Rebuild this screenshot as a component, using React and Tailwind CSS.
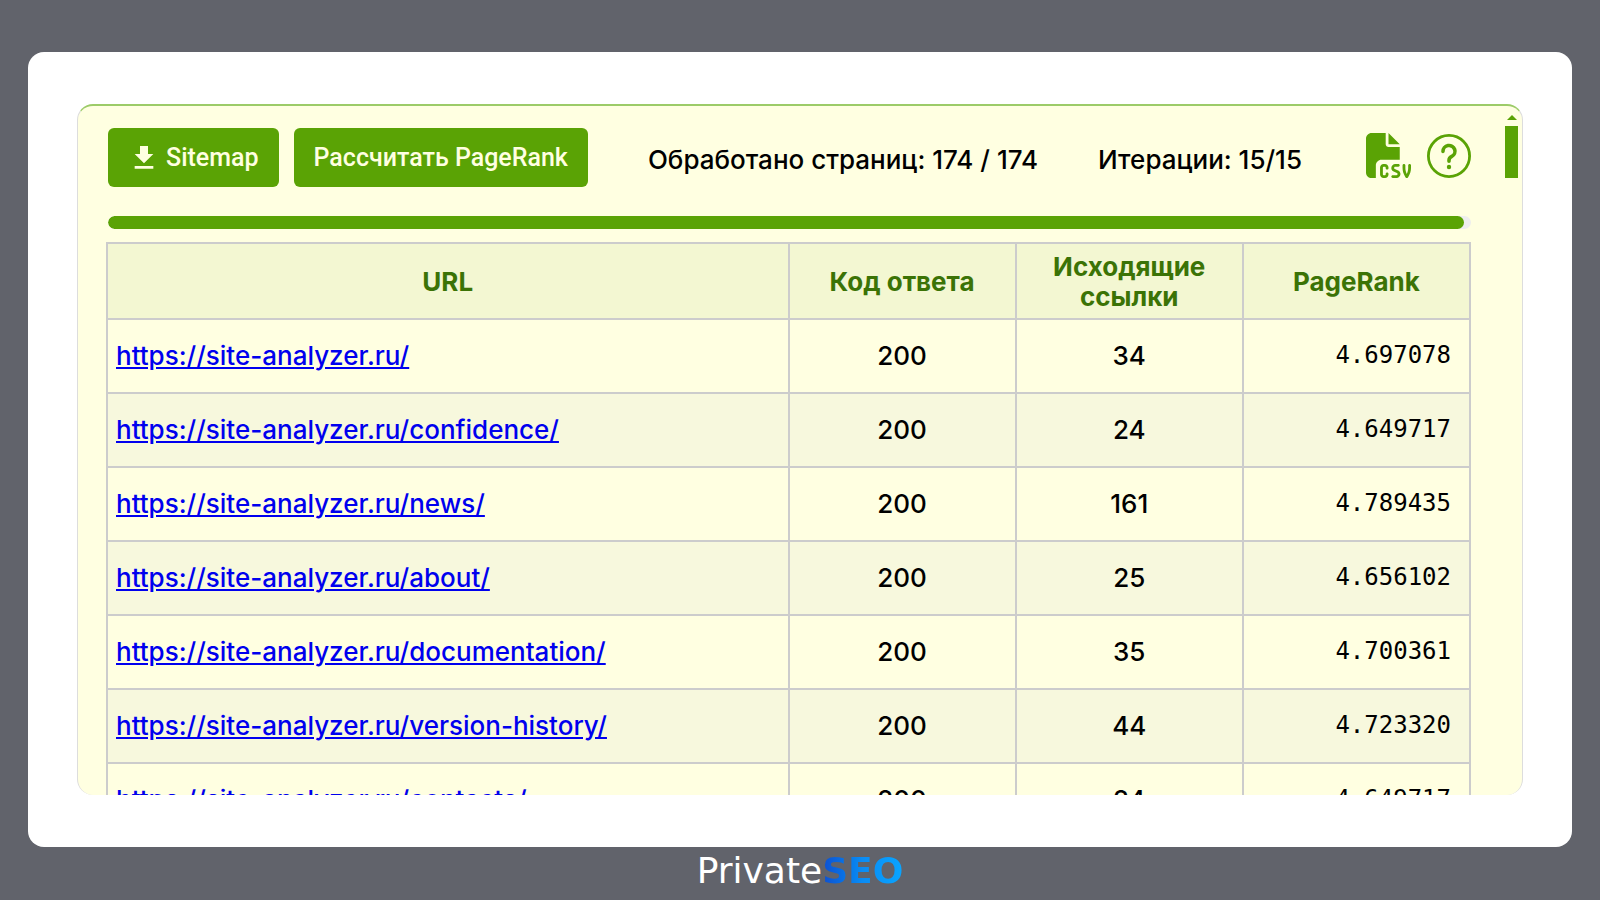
import { FaFileCsv } from 'react-icons/fa6';
import { MdFileDownload } from 'react-icons/md';

const SITE = 'https://site-analyzer.ru/';

const pages = [
    { path: '', code: 200, links: 34, rank: '4.697078' },
    { path: 'confidence/', code: 200, links: 24, rank: '4.649717' },
    { path: 'news/', code: 200, links: 161, rank: '4.789435' },
    { path: 'about/', code: 200, links: 25, rank: '4.656102' },
    { path: 'documentation/', code: 200, links: 35, rank: '4.700361' },
    { path: 'version-history/', code: 200, links: 44, rank: '4.723320' },
    { path: 'contacts/', code: 200, links: 24, rank: '4.649717' },
];

function HelpIcon() {
    return (
        <svg className="size-11" viewBox="0 0 44 44" fill="none" stroke="currentColor" strokeLinecap="round" strokeLinejoin="round">
            <circle cx="22" cy="22" r="20.6" strokeWidth="2.8" />
            <path d="M16 17.4a6 5.8 0 1 1 8.8 5c-1.9 1-2.8 2-2.8 3.8v1" strokeWidth="3.6" />
            <circle cx="22" cy="33" r="2.2" fill="currentColor" stroke="none" />
        </svg>
    );
}

function Toolbar() {
    return (
        <div className="flex items-center">
            <button type="button" className="flex h-[59px] items-center gap-[6px] rounded-md bg-[#5aa305] px-5 font-[Roboto,sans-serif] text-[25px] font-medium text-[#ffffe1]">
                <MdFileDownload className="size-8" />
                Sitemap
            </button>
            <button type="button" className="ml-[15px] h-[59px] rounded-md bg-[#5aa305] px-5 font-[Roboto,sans-serif] text-[25px] font-medium text-[#ffffe1]">
                Рассчитать PageRank
            </button>
            <p className="ml-[60px] pt-1 font-medium">Обработано страниц: 174 / 174</p>
            <p className="ml-[60px] pt-1 font-medium">Итерации: 15/15</p>
            <div className="ml-auto flex items-center gap-4 pb-1 text-[#5aa305]">
                <button type="button" aria-label="CSV">
                    <FaFileCsv className="size-[45px]" />
                </button>
                <button type="button" aria-label="Help">
                    <HelpIcon />
                </button>
            </div>
        </div>
    );
}

function ProgressBar({ percent }) {
    return (
        <div className="mt-[29px] h-[13px] overflow-hidden rounded-full bg-[#eeeeee]">
            <div className="h-full rounded-full bg-[#5aa305]" style={{ width: `${percent}%` }} />
        </div>
    );
}

function PagesTable() {
    return (
        <table className="mt-[13px] -ml-[2px] w-[calc(100%+2px)] table-fixed border-collapse">
            <colgroup>
                <col className="w-[50%]" />
                <col />
                <col />
                <col />
            </colgroup>
            <thead>
                <tr className="h-[76px] bg-[#f3f7d2] leading-[30px] text-[#3b7306]">
                    <th className="border-2 border-[#cccccc] pt-[2px] font-bold">URL</th>
                    <th className="border-2 border-[#cccccc] pt-[2px] font-bold">Код ответа</th>
                    <th className="border-2 border-[#cccccc] pt-[2px] font-bold">Исходящие ссылки</th>
                    <th className="border-2 border-[#cccccc] pt-[2px] font-bold">PageRank</th>
                </tr>
            </thead>
            <tbody className="font-medium">
                {pages.map((page) => (
                    <tr key={page.path} className="h-[74px] even:bg-[#f7f8dd]">
                        <td className="border-2 border-[#cccccc] px-2 pb-px">
                            <a href={SITE + page.path} className="text-[#0000ee] underline">
                                {SITE + page.path}
                            </a>
                        </td>
                        <td className="border-2 border-[#cccccc] pb-px text-center">{page.code}</td>
                        <td className="border-2 border-[#cccccc] pb-px text-center">{page.links}</td>
                        <td className="border-2 border-[#cccccc] pr-[18px] pb-[3px] text-right font-['DejaVu_Sans_Mono',monospace] text-[24px]">
                            {page.rank}
                        </td>
                    </tr>
                ))}
            </tbody>
        </table>
    );
}

function Scrollbar() {
    return (
        <div className="flex w-[13px] shrink-0 flex-col items-center gap-[6px] pt-[9px] text-[#5aa305]">
            <svg className="h-[5px] w-[10px]" viewBox="0 0 10 5" fill="currentColor">
                <path d="M5 0l5 5H0z" />
            </svg>
            <div className="h-[52px] w-full bg-[#5aa305]" />
        </div>
    );
}

export default function App() {
    return (
        <div className="flex h-screen flex-col bg-[#61636b] px-7 pt-[52px] font-[Inter,sans-serif] text-[26px] leading-8 text-black">
            <main className="flex min-h-0 flex-1 rounded-2xl bg-white px-[49px] py-[52px]">
                <div className="flex min-w-0 flex-1 overflow-hidden rounded-2xl border-x border-t-2 border-x-[#dddddd] border-t-[#9ccb68] bg-[#ffffe1] pr-1 pl-[30px]">
                    <div className="mr-[34px] min-w-0 flex-1 pt-[22px]">
                        <Toolbar />
                        <ProgressBar percent={99.5} />
                        <PagesTable />
                    </div>
                    <Scrollbar />
                </div>
            </main>
            <footer className="flex h-[53px] items-center justify-center pb-[6px] font-['DejaVu_Sans',sans-serif] text-[36px] leading-[44px] text-white">
                <span>Private</span>
                <span className="bg-linear-to-r from-[#0f4fd0] via-[#0a8cf5] to-[#0aa5ff] bg-clip-text font-bold text-transparent">SEO</span>
            </footer>
        </div>
    );
}
